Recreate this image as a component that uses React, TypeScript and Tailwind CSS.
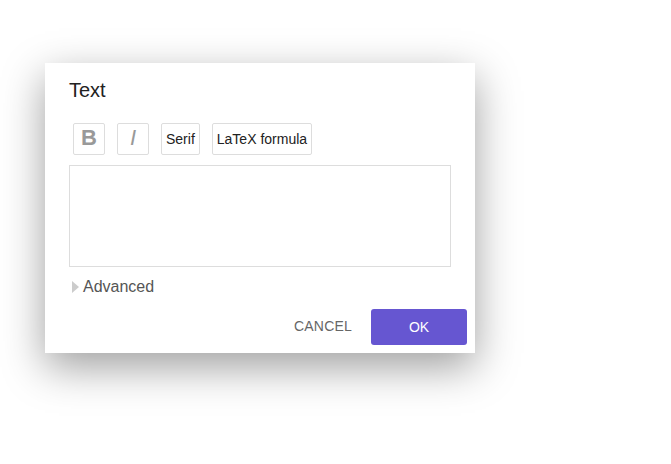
import React from 'react';

const App: React.FC = () => {
  return (
    <div className="w-[671px] h-[464px] bg-white overflow-hidden" style={{ fontFamily: '"Liberation Sans", Arial, sans-serif' }}>
      <div className="ml-[45px] mt-[63px] w-[430px] h-[290px] bg-white shadow-[0_14px_40px_rgba(0,0,0,0.38)] flex flex-col">
        <div className="pl-[24px] pt-[15px] text-[20px] leading-[24px] text-[#222]">Text</div>
        <div className="flex gap-[12px] pl-[28px] mt-[21px]">
          <button className="w-[32px] h-[32px] border border-[#ddd] rounded-[2px] text-[22px] font-bold text-[#999] flex items-center justify-center pb-[3px]">B</button>
          <button className="w-[32px] h-[32px] border border-[#ddd] rounded-[2px] text-[22px] italic text-[#999] flex items-center justify-center pb-[3px]">I</button>
          <button className="h-[32px] px-[4px] border border-[#ddd] rounded-[2px] text-[14px] text-[#222]">Serif</button>
          <button className="h-[32px] px-[4px] border border-[#ddd] rounded-[2px] text-[14px] text-[#222]">LaTeX formula</button>
        </div>
        <div className="ml-[24px] mt-[10px] w-[382px] h-[102px] border border-[#ddd]" />
        <div className="flex items-center pl-[27px] mt-[10px] h-[20px] text-[16px] text-[#555]">
          <span className="w-0 h-0 border-y-[6px] border-y-transparent border-l-[7px] border-l-[#ccc] mr-[4px]" />
          Advanced
        </div>
        <div className="flex justify-end items-center gap-[19px] pr-[8px] mt-[12px]">
          <button className="text-[14px] text-[#666] tracking-[0.2px] pb-[1px]">CANCEL</button>
          <button className="w-[96px] h-[36px] rounded-[3px] bg-[#6656d1] text-white text-[14px]">OK</button>
        </div>
      </div>
    </div>
  );
};

export default App;
